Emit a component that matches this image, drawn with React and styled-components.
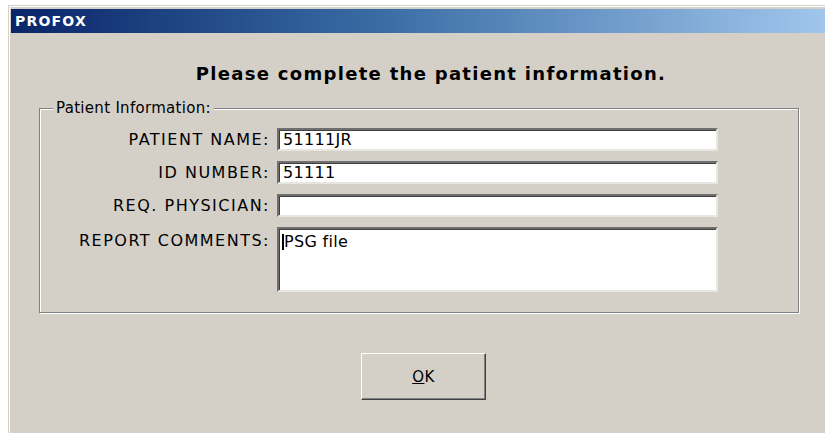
import React from 'react';
import styled, { createGlobalStyle } from 'styled-components';

const GlobalStyle = createGlobalStyle`
  html, body {
    margin: 0;
    padding: 0;
    background: #ffffff;
    overflow: hidden;
  }
`;

const face = '#d4d0c8';

const Window = styled.div`
  margin: 5px 0 0 8px;
  width: 840px;
  height: 440px;
  box-sizing: border-box;
  padding: 3px 2px 2px 2px;
  background: ${face};
  border: 1px solid ${face};
  box-shadow: inset 1px 1px 0 #ffffff;
  font-family: 'DejaVu Sans', Verdana, sans-serif;
  color: #000;
`;

const TitleBar = styled.div`
  height: 24px;
  display: flex;
  align-items: center;
  padding-left: 4px;
  background: linear-gradient(to right, #0a246a 0%, #3a6ea5 45%, #a6caf0 100%);
  color: #ffffff;
  font-weight: bold;
  font-size: 14px;
  letter-spacing: 1.2px;
`;

const Body = styled.div`
  display: flex;
  flex-direction: column;
`;

const Heading = styled.h1`
  margin: 30px 0 0 0;
  width: 840px;
  text-align: center;
  font-size: 18px;
  line-height: 22px;
  font-weight: bold;
  letter-spacing: 1.3px;
`;

const GroupBox = styled.fieldset`
  margin: 14px 0 0 28px;
  width: 760px;
  box-sizing: border-box;
  border: 1px solid #808080;
  box-shadow: 1px 1px 0 #ffffff, inset 1px 1px 0 #ffffff;
  padding: 11px 0 20px 0;
  display: grid;
  grid-template-columns: 230px 441px;
  column-gap: 7px;
  row-gap: 10px;
`;

const Caption = styled.legend`
  margin-left: 13px;
  padding: 0 3px;
  background: ${face};
  font-size: 15px;
  line-height: 18px;
  letter-spacing: 0.3px;
`;

const Label = styled.div`
  text-align: right;
  font-size: 16px;
  letter-spacing: 1.5px;
  line-height: ${p => (p.$top ? '20px' : '23px')};
  padding-top: ${p => (p.$top ? '4px' : '0')};
`;

const Field = styled.div`
  height: ${p => (p.$tall ? '65px' : '23px')};
  box-sizing: border-box;
  background: #ffffff;
  border-style: solid;
  border-width: 2px;
  border-color: #6f6f6f #e8e6e0 #e8e6e0 #6f6f6f;
  box-shadow: inset 1px 1px 0 #404040;
  padding: ${p => (p.$tall ? '3px 4px' : '0 4px')};
  display: flex;
  align-items: ${p => (p.$tall ? 'flex-start' : 'center')};
  font-size: 16px;
  line-height: 19px;
  letter-spacing: 0.3px;
`;

const Caret = styled.span`
  display: inline-block;
  width: 2px;
  height: 16px;
  margin: 2px 0 0 -1px;
  background: #000;
`;

const ButtonRow = styled.div`
  display: flex;
  padding: 40px 0 0 350px;
`;

const Button = styled.button`
  width: 125px;
  height: 47px;
  background: ${face};
  border-style: solid;
  border-width: 1px;
  border-color: #ffffff #404040 #404040 #ffffff;
  box-shadow: inset -1px -1px 0 #808080;
  font-family: 'DejaVu Sans', Verdana, sans-serif;
  font-size: 15px;
  letter-spacing: 0.5px;
  color: #000;
  padding: 0;
`;

const fields = [
  { label: 'PATIENT NAME:', value: '51111JR' },
  { label: 'ID NUMBER:', value: '51111' },
  { label: 'REQ. PHYSICIAN:', value: '' },
];

export default function App() {
  return (
    <>
      <GlobalStyle />
      <Window>
        <TitleBar>PROFOX</TitleBar>
        <Body>
          <Heading>Please complete the patient information.</Heading>
          <GroupBox>
            <Caption>Patient Information:</Caption>
            {fields.map(f => (
              <React.Fragment key={f.label}>
                <Label>{f.label}</Label>
                <Field>{f.value}</Field>
              </React.Fragment>
            ))}
            <Label $top>REPORT COMMENTS:</Label>
            <Field $tall>
              <Caret />
              PSG file
            </Field>
          </GroupBox>
          <ButtonRow>
            <Button>
              <u>O</u>K
            </Button>
          </ButtonRow>
        </Body>
      </Window>
    </>
  );
}
